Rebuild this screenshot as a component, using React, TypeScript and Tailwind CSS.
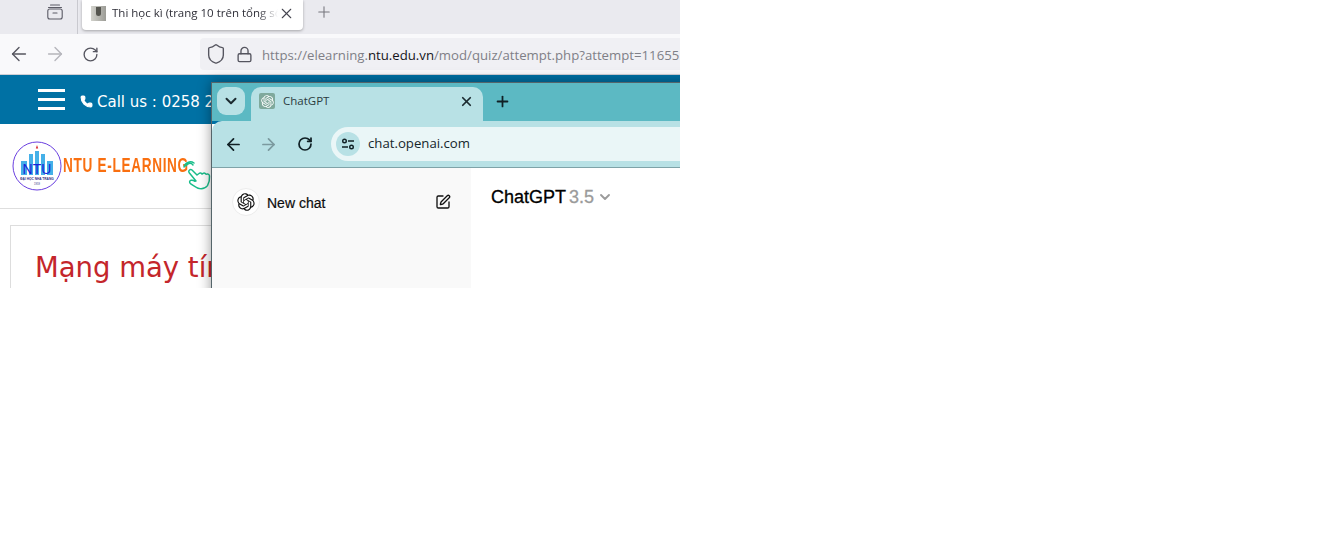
import { ArrowLeft, ArrowRight, ChevronDown, Lock, Phone, Plus, RotateCw, Shield, SquarePen, X } from "lucide-react"

const openAiPath =
  "M37.5324 16.8707C37.9808 15.5241 38.1363 14.0974 37.9886 12.6859C37.8409 11.2744 37.3934 9.91076 36.676 8.68622C35.6126 6.83404 33.9882 5.36762 32.0373 4.4985C30.0864 3.62938 27.9098 3.40232 25.8215 3.85009C24.8796 2.7893 23.7219 1.94125 22.4257 1.36255C21.1295 0.783847 19.7249 0.487897 18.3058 0.494732C16.1708 0.489582 14.0893 1.16272 12.3614 2.41717C10.6335 3.67163 9.34853 5.44294 8.6917 7.47508C7.30085 7.75983 5.98686 8.33838 4.8377 9.17196C3.68854 10.0055 2.73073 11.0746 2.02839 12.3078C0.956464 14.1555 0.498905 16.2965 0.721698 18.4212C0.944492 20.5459 1.83612 22.5449 3.268 24.1293C2.81966 25.4759 2.66413 26.9026 2.81182 28.3141C2.95951 29.7256 3.40701 31.0892 4.12437 32.3138C5.18791 34.1659 6.8123 35.6322 8.76321 36.5013C10.7141 37.3704 12.8907 37.5973 14.9789 37.1492C15.9208 38.2107 17.0786 39.0587 18.3747 39.6373C19.6709 40.2159 21.0755 40.5115 22.4946 40.5045C24.6307 40.5099 26.7133 39.8363 28.4418 38.5814C30.1704 37.3265 31.4556 35.5545 32.1119 33.5217C33.5027 33.2369 34.8167 32.6584 35.9659 31.8248C37.115 30.9912 38.0728 29.9221 38.7752 28.6889C39.8458 26.8413 40.3023 24.7007 40.0789 22.5765C39.8556 20.4523 38.9639 18.4536 37.5324 16.8707ZM22.4978 37.8849C20.7443 37.8874 19.0459 37.2733 17.6994 36.1501C17.7601 36.117 17.8666 36.0586 17.936 36.0161L25.9004 31.4156C26.1003 31.3019 26.2663 31.137 26.3813 30.9378C26.4964 30.7386 26.5563 30.5124 26.5549 30.2825V19.0542L29.9213 20.998C29.9389 21.0068 29.9541 21.0198 29.9656 21.0359C29.977 21.052 29.9842 21.0707 29.9867 21.0902V30.3889C29.9842 32.375 29.1946 34.2791 27.7909 35.6841C26.3872 37.0892 24.4838 37.8806 22.4978 37.8849ZM6.39227 31.0064C5.51397 29.4888 5.19742 27.7107 5.49804 25.9832C5.55718 26.0187 5.66048 26.0818 5.73461 26.1244L13.699 30.7248C13.8975 30.8408 14.1233 30.902 14.3532 30.902C14.583 30.902 14.8088 30.8408 15.0073 30.7248L24.731 25.1103V28.9979C24.7321 29.0177 24.7283 29.0376 24.7199 29.0556C24.7115 29.0736 24.6988 29.0893 24.6829 29.1012L16.6317 33.7497C14.9096 34.7416 12.8643 35.0097 10.9447 34.4954C9.02506 33.9811 7.38785 32.7263 6.39227 31.0064ZM4.29707 13.6194C5.17156 12.0998 6.55279 10.9364 8.19885 10.3327C8.19885 10.4013 8.19491 10.5228 8.19491 10.6071V19.808C8.19351 20.0378 8.25334 20.2638 8.36823 20.4629C8.48312 20.6619 8.64893 20.8267 8.84863 20.9404L18.5723 26.5542L15.206 28.4979C15.1894 28.5089 15.1703 28.5155 15.1505 28.5173C15.1307 28.5191 15.1107 28.516 15.0924 28.5082L7.04046 23.8557C5.32135 22.8601 4.06716 21.2235 3.55289 19.3046C3.03862 17.3858 3.30624 15.3413 4.29707 13.6194ZM31.955 20.0556L22.2312 14.4411L25.5976 12.4981C25.6142 12.4872 25.6333 12.4805 25.6531 12.4787C25.6729 12.4769 25.6928 12.4801 25.7111 12.4879L33.7631 17.1364C34.9967 17.849 36.0017 18.8982 36.6606 20.1613C37.3194 21.4244 37.6047 22.849 37.4832 24.2684C37.3617 25.6878 36.8382 27.0432 35.9743 28.1759C35.1103 29.3086 33.9415 30.1717 32.6047 30.6641C32.6047 30.5947 32.6047 30.4733 32.6047 30.3889V21.188C32.6066 20.9586 32.5474 20.7328 32.4332 20.5338C32.319 20.3348 32.154 20.1698 31.955 20.0556ZM35.3055 15.0128C35.2464 14.9765 35.1431 14.9142 35.069 14.8717L27.1045 10.2712C26.906 10.1554 26.6803 10.0943 26.4504 10.0943C26.2206 10.0943 25.9948 10.1554 25.7963 10.2712L16.0726 15.8858V11.9982C16.0715 11.9783 16.0753 11.9585 16.0837 11.9405C16.0921 11.9225 16.1048 11.9068 16.1207 11.8949L24.1719 7.25025C25.4053 6.53903 26.8158 6.19376 28.2383 6.25482C29.6608 6.31589 31.0364 6.78077 32.2044 7.59508C33.3723 8.40939 34.2842 9.53945 34.8334 10.8531C35.3826 12.1667 35.5464 13.6095 35.3055 15.0128ZM14.2424 21.9419L10.8752 19.9981C10.8576 19.9893 10.8423 19.9763 10.8309 19.9602C10.8195 19.9441 10.8122 19.9254 10.8098 19.9058V10.6071C10.8107 9.18295 11.2173 7.78848 11.9819 6.58696C12.7466 5.38544 13.8377 4.42659 15.1275 3.82264C16.4173 3.21869 17.8524 2.99464 19.2649 3.1767C20.6775 3.35876 22.0089 3.93941 23.1034 4.85067C23.0427 4.88379 22.937 4.94215 22.8668 4.98473L14.9024 9.58517C14.7025 9.69878 14.5366 9.86356 14.4215 10.0626C14.3065 10.2616 14.2466 10.4877 14.2479 10.7175L14.2424 21.9419ZM16.071 17.9991L20.4018 15.4978L24.7325 17.9975V22.9985L20.4018 25.4983L16.071 22.9985V17.9991Z"

function OpenAiMark({ className }: { className?: string }) {
  return (
    <svg viewBox="0 0 41 41" className={className} fill="currentColor">
      <path d={openAiPath} />
    </svg>
  )
}

function NtuLogo() {
  return (
    <svg viewBox="0 0 50 50" className="h-[50px] w-[50px] shrink-0">
      <circle cx="25" cy="25" r="24" fill="#fff" stroke="#6a3fe0" strokeWidth="1" />
      <polygon points="25,4 26.2,7.5 23.8,7.5" fill="#d8232a" />
      <rect x="9" y="20" width="6" height="14" fill="#45b0e8" />
      <rect x="17" y="13" width="4" height="21" fill="#45b0e8" />
      <rect x="23" y="10" width="4" height="24" fill="#45b0e8" />
      <rect x="29" y="13" width="4" height="21" fill="#45b0e8" />
      <rect x="35" y="20" width="6" height="14" fill="#45b0e8" />
      <text x="25" y="33" textAnchor="middle" fontSize="14" fontFamily="Liberation Sans" fill="#1a22d8">
        NTU
      </text>
      <text x="25" y="38.5" textAnchor="middle" fontSize="3.2" fontWeight="700" fontFamily="Liberation Sans" fill="#2a2a80">
        ĐẠI HỌC NHA TRANG
      </text>
      <text x="25" y="44" textAnchor="middle" fontSize="2.6" fontFamily="Liberation Sans" fill="#2a2a80">
        1959
      </text>
    </svg>
  )
}

function FirefoxBar() {
  return (
    <div className="shrink-0 font-['Open_Sans',sans-serif]">
      {/* Tab strip */}
      <div className="flex h-[34px] bg-[#eaeaef]">
        <div className="flex h-[34px] w-[78px] justify-end border-r border-[#c9c9cf] pr-[14px] pt-[4px]">
          <svg viewBox="0 0 16 16" className="h-[16px] w-[16px]" fill="none" stroke="#5b5b66" strokeWidth="1.1">
            <path d="M3.5 1h9M1.5 3.5h13" strokeLinecap="round" />
            <rect x="0.8" y="5" width="14.4" height="10" rx="2" />
            <path d="M6 9h4" strokeLinecap="round" />
          </svg>
        </div>
        <div className="ml-[4px] flex h-[30px] w-[221px] items-center rounded-b-[4px] bg-white pb-[4px] pl-[9px] pr-[8px] shadow-[0_1px_3px_rgba(0,0,0,0.3)]">
          <div className="flex h-[15px] w-[15px] shrink-0 justify-center bg-gradient-to-r from-[#d2d2cc] to-[#9c9c96]">
            <div className="mt-[1px] h-[9px] w-[5px] rounded-b-[3px] bg-[#55554f]" />
          </div>
          <div className="ml-[6px] w-[166px] overflow-hidden whitespace-nowrap text-[11.5px] leading-[16px] text-[#2f2f38] [mask-image:linear-gradient(to_right,black_88%,transparent)]">
            Thi học kì (trang 10 trên tổng số
          </div>
          <X className="ml-auto h-[17px] w-[17px] text-[#45454f]" strokeWidth={1.5} />
        </div>
        <Plus className="ml-[12px] mt-[3px] h-[18px] w-[18px] text-[#74747c]" strokeWidth={1.4} />
      </div>
      {/* Navigation */}
      <div className="flex h-[41px] items-center border-b border-[#cfcfd5] bg-[#f9f9fb]">
        <ArrowLeft className="ml-[8px] h-[22px] w-[22px] text-[#55555f]" strokeWidth={1.5} />
        <ArrowRight className="ml-[14px] h-[22px] w-[22px] text-[#b5b5bb]" strokeWidth={1.5} />
        <RotateCw className="ml-[16px] h-[17px] w-[17px] text-[#55555f]" strokeWidth={1.9} />
        <div className="ml-[101px] flex h-[32px] flex-1 items-center rounded-l-[4px] bg-[#f0f0f4] pl-[5px]">
          <Shield className="h-[22px] w-[22px] shrink-0 text-[#55555f]" strokeWidth={1.5} />
          <Lock className="ml-[9px] h-[17px] w-[17px] shrink-0 text-[#55555f]" strokeWidth={1.9} />
          <div className="ml-[9px] whitespace-nowrap pt-[3px] text-[13.2px] leading-none text-[#7f7f87]">
            https://elearning.<span className="text-[#15141a]">ntu.edu.vn</span>/mod/quiz/attempt.php?attempt=11655
          </div>
        </div>
      </div>
    </div>
  )
}

function SitePage() {
  return (
    <div className="font-['DejaVu_Sans',sans-serif]">
      <div className="flex h-[49px] items-center bg-[#0071a4] pl-[38px]">
        <div className="flex w-[27px] flex-col gap-[6px]">
          <div className="h-[3px] bg-white" />
          <div className="h-[3px] bg-white" />
          <div className="h-[3px] bg-white" />
        </div>
        <Phone className="ml-[15px] mt-[4px] h-[13px] w-[13px] fill-white text-white" />
        <span className="ml-[4px] mt-[5px] whitespace-nowrap text-[15px] text-white">Call us : 0258 2471303</span>
      </div>
      <div className="relative flex h-[85px] items-center border-b border-[#dedede] pl-[12px]">
        <NtuLogo />
        <span className="ml-[1px] mb-[2px] origin-left scale-x-[0.68] whitespace-nowrap font-['Liberation_Sans',sans-serif] text-[20px] font-bold tracking-[1px] text-[#f96f10]">
          NTU E-LEARNING
        </span>
        <svg viewBox="0 0 28 32" className="absolute left-[183px] top-[36px] h-[32px] w-[28px]" fill="none" stroke="#19bd8a" strokeWidth="1.5" strokeLinecap="round" strokeLinejoin="round">
          <path d="M3 6a4 4 0 0 1 7-1M1 7a6.5 6.5 0 0 1 10-4" />
          <path d="M13 21 6 12.5a2 2 0 0 1 3-2.5l5 5 2-1.5a2 2 0 0 1 3 .5l1-.5a2 2 0 0 1 3 .8l1-.2a2 2 0 0 1 2.5 2c.3 4-.5 7-2 9.5-2 2.5-5 3.5-8 3-3-.7-6-3-9-5-1.5-1-1-3 .5-3.3 1.5-.3 3 .3 4 1" />
        </svg>
      </div>
      <div className="ml-[10px] mt-[16px] h-[80px] border-l border-t border-[#dddddd] pl-[24px] pt-[21px]">
        <div className="whitespace-nowrap text-[27.5px] leading-[40px] text-[#c4262b]">Mạng máy tính</div>
      </div>
    </div>
  )
}

function ChromeWindow() {
  return (
    <div className="absolute left-[211px] top-[82px] h-[220px] w-[480px] border-l border-t border-[#55656a] font-['Open_Sans',sans-serif] shadow-[0_0_12px_rgba(0,0,0,0.4)]">
      {/* Tab strip */}
      <div className="flex h-[38px] bg-[#5cb9c3] pl-[5px] pt-[4px]">
        <div className="flex h-[28px] w-[28px] items-center justify-center rounded-[9px] bg-[#b8e1e5]">
          <ChevronDown className="h-[18px] w-[18px] text-[#1c2b30]" strokeWidth={2.6} />
        </div>
        <div className="ml-[6px] flex h-[34px] w-[232px] items-center rounded-t-[10px] bg-[#b8e1e5] pb-[6px] pl-[8px] pr-[9px]">
          <div className="flex h-[16px] w-[16px] items-center justify-center rounded-[2px] bg-[#7fa99c]">
            <OpenAiMark className="h-[13px] w-[13px] text-white" />
          </div>
          <span className="ml-[8px] text-[11.5px] leading-[16px] text-[#2b3c40]">ChatGPT</span>
          <X className="ml-auto h-[15px] w-[15px] text-[#1c2b30]" strokeWidth={2.8} />
        </div>
        <Plus className="ml-[11px] mt-[6px] h-[17px] w-[17px] text-[#102025]" strokeWidth={2.5} />
      </div>
      {/* Toolbar */}
      <div className="flex h-[47px] items-center rounded-tl-[10px] border-b border-[#7fa3a8] bg-[#b8e1e5] pl-[12px]">
        <ArrowLeft className="h-[19px] w-[19px] text-[#102025]" strokeWidth={2.2} />
        <ArrowRight className="ml-[16px] h-[19px] w-[19px] text-[#7b9a9f]" strokeWidth={2.2} />
        <RotateCw className="ml-[19px] h-[16px] w-[16px] text-[#102025]" strokeWidth={2.6} />
        <div className="ml-[18px] flex h-[34px] flex-1 items-center rounded-l-full bg-[#eaf6f7] pl-[5px]">
          <div className="flex h-[24px] w-[24px] items-center justify-center rounded-full bg-[#b8e1e5]">
            <svg viewBox="0 0 14 14" className="h-[14px] w-[14px]" fill="none" stroke="#102025" strokeWidth="1.4">
              <circle cx="3.5" cy="4" r="1.8" />
              <path d="M7 4h6M1 10h6" />
              <circle cx="10.5" cy="10" r="1.8" />
            </svg>
          </div>
          <span className="ml-[8px] text-[13.2px] text-[#16262b]">chat.openai.com</span>
        </div>
      </div>
      {/* Page */}
      <div className="flex h-[136px] bg-white font-['Liberation_Sans',sans-serif]">
        <div className="flex h-full w-[259px] items-start bg-[#f9f9f9] pl-[20px] pr-[20px] pt-[20px]">
          <div className="flex h-[28px] w-[28px] items-center justify-center rounded-full border border-[#ececec] bg-white">
            <OpenAiMark className="h-[18px] w-[18px] text-[#111]" />
          </div>
          <span className="ml-[7px] mt-[6px] text-[14px] leading-[18px] font-medium text-[#0d0d0d] [-webkit-text-stroke:0.2px_#0d0d0d]">New chat</span>
          <SquarePen className="ml-auto mt-[6px] h-[16px] w-[16px] text-[#111]" strokeWidth={2} />
        </div>
        <div className="mt-[19px] flex h-[20px] items-center pl-[20px] text-[18px] leading-[20px] [-webkit-text-stroke:0.3px_currentColor]">
          <span className="text-black">ChatGPT</span>
          <span className="ml-[3px] text-[#9b9b9b]">3.5</span>
          <ChevronDown className="ml-[3px] h-[16px] w-[16px] text-[#9b9b9b]" strokeWidth={2.8} />
        </div>
      </div>
    </div>
  )
}

export default function App() {
  return (
    <div className="h-[548px] w-[1338px] bg-white">
      <div className="relative h-[288px] w-[680px] overflow-hidden bg-white">
        <FirefoxBar />
        <SitePage />
        <ChromeWindow />
      </div>
    </div>
  )
}
